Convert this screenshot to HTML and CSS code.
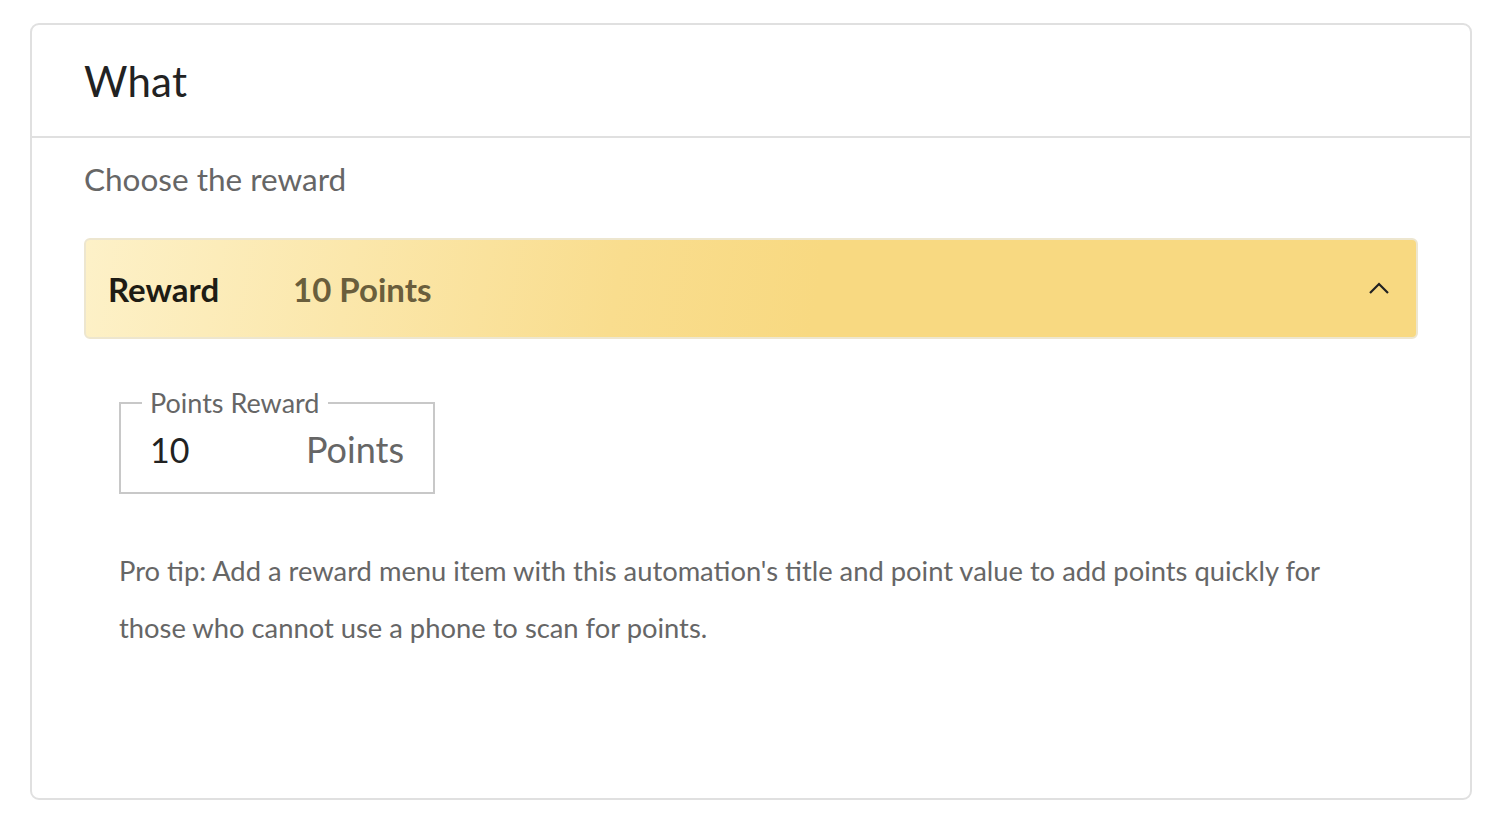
FILE: index.html
```html
<!DOCTYPE html>
<html>
<head>
<meta charset="utf-8">
<link rel="stylesheet" href="styles.css">
</head>
<body>
<div class="card">
  <div class="card-header"><h2 class="title">What</h2></div>
  <div class="card-body">
    <p class="subtitle">Choose the reward</p>
    <div class="accordion">
      <span class="acc-label">Reward</span>
      <span class="acc-value">10 Points</span>
      <svg class="chevron" width="22" height="14" viewBox="0 0 22 14"><path d="M2 12 L11 3 L20 12" fill="none" stroke="#222" stroke-width="2.2"/></svg>
    </div>
    <div class="panel">
      <fieldset class="field">
        <legend class="field-legend">Points Reward</legend>
        <div class="field-row">
          <span class="field-value">10</span>
          <span class="field-unit">Points</span>
        </div>
      </fieldset>
      <p class="tip">Pro tip: Add a reward menu item with this automation's title and point value to add points quickly for those who cannot use a phone to scan for points.</p>
    </div>
  </div>
</div>
</body>
</html>
```
FILE: styles.css
```css
* { box-sizing: border-box; }
html, body { margin: 0; padding: 0; background: #fff; }
body {
  font-family: "Lato", "Liberation Sans", sans-serif;
  padding: 23px 24px 0 30px;
}
.card {
  width: 1442px;
  height: 777px;
  border: 2px solid #e0e0e0;
  border-radius: 9px;
}
.card-header {
  height: 113px;
  border-bottom: 2px solid #e0e0e0;
  padding: 0 52px;
  display: flex;
  align-items: center;
}
.title {
  margin: 0;
  font-weight: 400;
  font-size: 42px;
  color: #222;
  letter-spacing: 0.2px;
}
.card-body { padding: 20px 52px 0 52px; }
.subtitle {
  margin: 0;
  font-size: 31.5px;
  color: #666;
  line-height: 42px;
}
.accordion {
  margin-top: 38px;
  height: 101px;
  border: 2px solid #ede6cf;
  border-radius: 6px;
  background: linear-gradient(100deg, #fdf1c8 0%, #f9dd8e 40%, #f8d981 55%, #f8d981 100%);
  display: flex;
  align-items: center;
  padding: 0 26px 0 22px;
}
.acc-label {
  font-weight: 700;
  font-size: 33px;
  color: #1e1c14;
  width: 185px;
}
.acc-value {
  font-weight: 700;
  font-size: 33px;
  color: #6a5e3c;
  flex: 1;
}
.chevron { display: block; margin-top: -2px; }
.panel { padding: 50px 0 0 35px; }
.field {
  margin: 0;
  width: 316px;
  height: 105px;
  border: 2px solid #c8c8c8;
  padding: 0 29px 0 29px;
  position: relative;
}
.field-legend {
  font-size: 27px;
  color: #666;
  padding: 0 8px;
  margin-left: -8px;
  line-height: 27px;
}
.field-row {
  display: flex;
  justify-content: space-between;
  align-items: center;
  margin-top: 11px;
}
.field-value { font-size: 34px; color: #222; }
.field-unit { font-size: 36px; color: #666; }
.tip {
  margin: 48px 0 0 0;
  font-size: 27.35px;
  line-height: 57px;
  color: #666;
  max-width: 1240px;
}
```
